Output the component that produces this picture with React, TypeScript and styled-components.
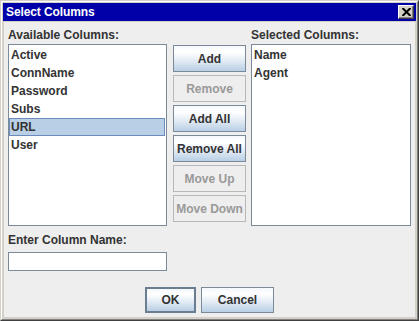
import React from "react";
import styled, { createGlobalStyle, css } from "styled-components";

const GlobalStyle = createGlobalStyle`
  html, body {
    margin: 0;
    padding: 0;
    background: #d4d0c8;
  }
  body {
    font-family: "Liberation Sans", Arial, sans-serif;
  }
`;

const available = ["Active", "ConnName", "Password", "Subs", "URL", "User"];
const selected = ["Name", "Agent"];

const sideButtons = [
  { label: "Add", enabled: true },
  { label: "Remove", enabled: false },
  { label: "Add All", enabled: true },
  { label: "Remove All", enabled: true },
  { label: "Move Up", enabled: false },
  { label: "Move Down", enabled: false },
];

const App: React.FC = () => {
  return (
    <>
      <GlobalStyle />
      <Frame>
        <Bevel>
          <TitleBar>
            <TitleText>Select Columns</TitleText>
            <CloseButton>
              <svg width="9" height="8" viewBox="0 0 9 8">
                <path d="M0.5 0 L8.5 8 M8.5 0 L0.5 8" stroke="#000" strokeWidth="2" />
              </svg>
            </CloseButton>
          </TitleBar>
          <Content>
            <Columns>
              <ListColumn>
                <Label>Available Columns:</Label>
                <ListBox $width={159}>
                  {available.map((name) => (
                    <ListItem key={name} $selected={name === "URL"}>
                      {name}
                    </ListItem>
                  ))}
                </ListBox>
              </ListColumn>
              <ButtonColumn>
                {sideButtons.map((b) => (
                  <SideButton key={b.label} disabled={!b.enabled}>
                    {b.label}
                  </SideButton>
                ))}
              </ButtonColumn>
              <ListColumn>
                <Label>Selected Columns:</Label>
                <ListBox $width={160}>
                  {selected.map((name) => (
                    <ListItem key={name}>{name}</ListItem>
                  ))}
                </ListBox>
              </ListColumn>
            </Columns>
            <NameSection>
              <Label>Enter Column Name:</Label>
              <TextField />
            </NameSection>
            <Footer>
              <DialogButton $default $width={51}>
                OK
              </DialogButton>
              <DialogButton $width={73}>Cancel</DialogButton>
            </Footer>
          </Content>
        </Bevel>
      </Frame>
    </>
  );
};

export default App;

const Frame = styled.div`
  width: 419px;
  height: 321px;
  box-sizing: border-box;
  border: 1px solid;
  border-color: #d4d0c8 #404040 #404040 #d4d0c8;
  overflow: hidden;
`;

const Bevel = styled.div`
  height: 100%;
  box-sizing: border-box;
  border: 1px solid;
  border-color: #ffffff #808080 #808080 #ffffff;
  padding: 1px;
  background: #d4d0c8;
  display: flex;
  flex-direction: column;
`;

const TitleBar = styled.div`
  height: 18px;
  flex: none;
  background: #0000a8;
  display: flex;
  align-items: center;
  justify-content: space-between;
  padding: 0 2px 0 3px;
`;

const TitleText = styled.span`
  color: #ffffff;
  font-weight: bold;
  font-size: 12px;
  letter-spacing: -0.1px;
`;

const CloseButton = styled.div`
  width: 16px;
  height: 14px;
  box-sizing: border-box;
  background: #d4d0c8;
  border: 1px solid;
  border-color: #ffffff #404040 #404040 #ffffff;
  box-shadow: inset -1px -1px 0 #808080;
  display: flex;
  align-items: center;
  justify-content: center;
  padding-bottom: 1px;
`;

const Content = styled.div`
  flex: 1;
  margin: 1px;
  background: #eeeeee;
  padding: 6px 4px 0 4px;
  display: flex;
  flex-direction: column;
  color: #333333;
`;

const Columns = styled.div`
  display: flex;
`;

const ListColumn = styled.div`
  display: flex;
  flex-direction: column;
  gap: 2px;
`;

const Label = styled.div`
  font-size: 12px;
  font-weight: bold;
  line-height: 14px;
  height: 14px;
  color: #333333;
  white-space: nowrap;
`;

const ListBox = styled.div<{ $width: number }>`
  width: ${(p) => p.$width}px;
  height: 182px;
  box-sizing: border-box;
  background: #ffffff;
  border: 1px solid #7a8a99;
  padding: 1px 1px 0 0;
`;

const ListItem = styled.div<{ $selected?: boolean }>`
  height: 18px;
  box-sizing: border-box;
  line-height: 16px;
  padding-left: 1px;
  font-size: 12px;
  font-weight: bold;
  color: #333333;
  border: 1px solid transparent;
  ${(p) =>
    p.$selected &&
    css`
      background: #b8cfe5;
      border-color: #6b8bbd;
    `}
`;

const ButtonColumn = styled.div`
  width: 73px;
  margin: 17px 5px 0 6px;
  display: flex;
  flex-direction: column;
  gap: 3px;
`;

const buttonBase = css`
  box-sizing: border-box;
  font-family: "Liberation Sans", Arial, sans-serif;
  font-size: 12px;
  font-weight: bold;
  color: #333333;
  padding: 0;
  border: 1px solid #7a8a99;
  background: linear-gradient(to bottom, #f4f8fc 0%, #ffffff 25%, #dce7f2 65%, #b8cfe5 100%);
  white-space: nowrap;
`;

const SideButton = styled.button`
  ${buttonBase}
  height: 27px;
  width: 73px;

  &:disabled {
    background: #eeeeee;
    border-color: #b8b8b8;
    color: #999999;
  }
`;

const NameSection = styled.div`
  margin-top: 7px;
  display: flex;
  flex-direction: column;
  gap: 5px;
`;

const TextField = styled.div`
  width: 159px;
  height: 19px;
  box-sizing: border-box;
  background: #ffffff;
  border: 1px solid #7a8a99;
`;

const Footer = styled.div`
  margin-top: 16px;
  display: flex;
  justify-content: center;
  gap: 5px;
`;

const DialogButton = styled.button<{ $default?: boolean; $width: number }>`
  ${buttonBase}
  height: 26px;
  width: ${(p) => p.$width}px;
  ${(p) =>
    p.$default &&
    css`
      border: 2px solid #6a7d91;
    `}
`;
